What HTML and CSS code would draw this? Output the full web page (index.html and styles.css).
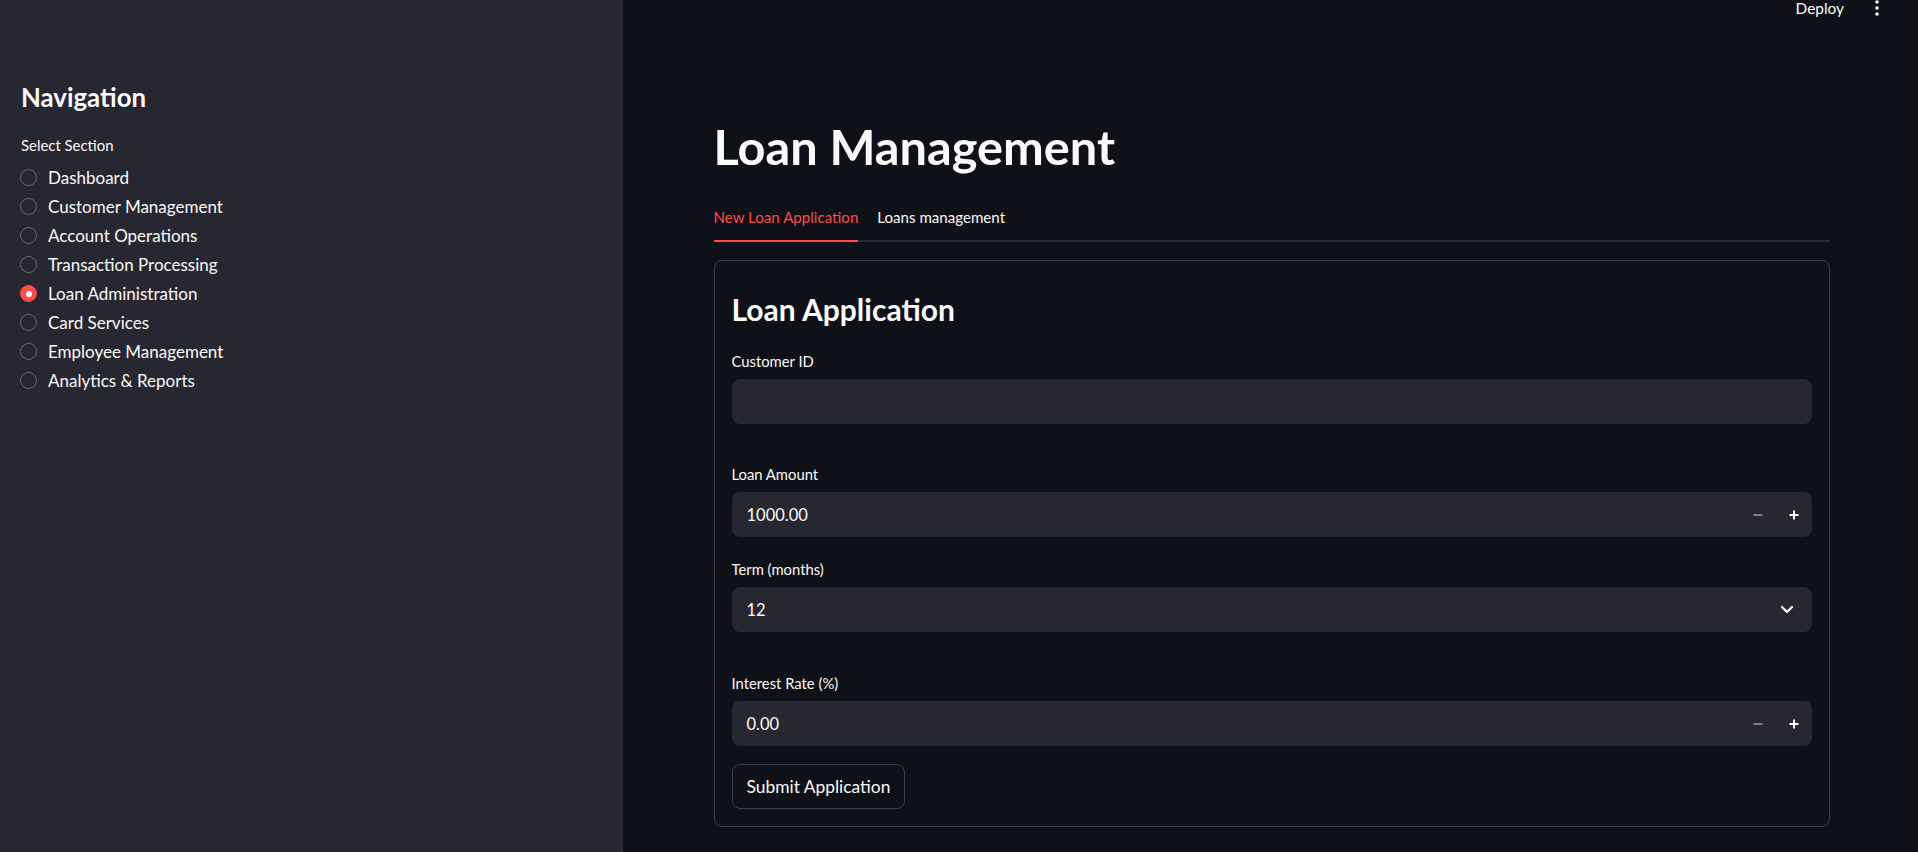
FILE: index.html
```html
<!DOCTYPE html>
<html lang="en">
<head>
<meta charset="utf-8">
<title>Loan Management</title>
<link rel="stylesheet" href="styles.css">
</head>
<body>
<div class="app">
  <aside class="sidebar">
    <h2 class="side-title">Navigation</h2>
    <div class="radio-caption">Select Section</div>
    <div class="radio-group">
      <div class="radio"><span class="circle"></span><span>Dashboard</span></div>
      <div class="radio"><span class="circle"></span><span>Customer Management</span></div>
      <div class="radio"><span class="circle"></span><span>Account Operations</span></div>
      <div class="radio"><span class="circle"></span><span>Transaction Processing</span></div>
      <div class="radio checked"><span class="circle"></span><span>Loan Administration</span></div>
      <div class="radio"><span class="circle"></span><span>Card Services</span></div>
      <div class="radio"><span class="circle"></span><span>Employee Management</span></div>
      <div class="radio"><span class="circle"></span><span>Analytics &amp; Reports</span></div>
    </div>
  </aside>
  <main class="main">
    <header class="topbar">
      <span class="deploy">Deploy</span>
      <span class="menu">
        <svg width="4" height="16" viewBox="0 0 4 16"><circle cx="2" cy="2" r="1.8" fill="#fafafa"/><circle cx="2" cy="8" r="1.8" fill="#fafafa"/><circle cx="2" cy="14" r="1.8" fill="#fafafa"/></svg>
      </span>
    </header>
    <div class="content">
      <h1 class="page-title">Loan Management</h1>
      <div class="tabs">
        <div class="tab active">New Loan Application</div>
        <div class="tab">Loans management</div>
      </div>
      <section class="card">
        <h2 class="card-title">Loan Application</h2>
        <div class="field f1">
          <div class="label">Customer ID</div>
          <div class="input"></div>
        </div>
        <div class="field f2">
          <div class="label">Loan Amount</div>
          <div class="input number">
            <span class="value">1000.00</span>
            <span class="steppers">
              <span class="step"><svg width="10" height="10" viewBox="0 0 10 10"><rect x="0.5" y="4" width="9" height="2" fill="#7d7f87"/></svg></span>
              <span class="step"><svg width="10" height="10" viewBox="0 0 10 10"><rect x="0.5" y="4" width="9" height="2" fill="#fafafa"/><rect x="4" y="0.5" width="2" height="9" fill="#fafafa"/></svg></span>
            </span>
          </div>
        </div>
        <div class="field f3">
          <div class="label">Term (months)</div>
          <div class="input select">
            <span class="value">12</span>
            <svg class="chev" width="14" height="9" viewBox="0 0 14 9"><path d="M2 2l5 5 5-5" fill="none" stroke="#fafafa" stroke-width="2.4" stroke-linecap="round" stroke-linejoin="round"/></svg>
          </div>
        </div>
        <div class="field f4">
          <div class="label">Interest Rate (%)</div>
          <div class="input number">
            <span class="value">0.00</span>
            <span class="steppers">
              <span class="step"><svg width="10" height="10" viewBox="0 0 10 10"><rect x="0.5" y="4" width="9" height="2" fill="#7d7f87"/></svg></span>
              <span class="step"><svg width="10" height="10" viewBox="0 0 10 10"><rect x="0.5" y="4" width="9" height="2" fill="#fafafa"/><rect x="4" y="0.5" width="2" height="9" fill="#fafafa"/></svg></span>
            </span>
          </div>
        </div>
        <button class="submit">Submit Application</button>
      </section>
    </div>
  </main>
</div>
</body>
</html>
```

FILE: styles.css
```css
* { box-sizing: border-box; }
html, body { margin: 0; padding: 0; }
body {
  width: 1918px;
  height: 852px;
  overflow: hidden;
  background: #0e1117;
  color: #fafafa;
  font-family: Lato, "Noto Sans", sans-serif;
}
.app { display: flex; height: 852px; }
.sidebar {
  width: 623px;
  flex: none;
  background: #262730;
  padding: 82px 20px 0 20px;
}
.side-title {
  margin: 0;
  font-size: 25.8px;
  line-height: 31px;
  font-weight: 700;
  padding-left: 1px;
}
.radio-caption {
  margin-top: 20px;
  font-size: 14.9px;
  line-height: 24px;
  padding-left: 1px;
}
.radio-group { margin-top: 6px; }
.radio {
  display: flex;
  align-items: center;
  height: 29px;
  font-size: 17px;
  gap: 11px;
}
.circle {
  width: 17px;
  height: 17px;
  border-radius: 50%;
  border: 1.5px solid #6a6c74;
  flex: none;
  position: relative;
}
.radio.checked .circle {
  background: #ff4b4b;
  border-color: #ff4b4b;
}
.radio.checked .circle::after {
  content: "";
  position: absolute;
  left: 50%;
  top: 50%;
  width: 6px;
  height: 6px;
  margin: -3px 0 0 -3px;
  border-radius: 50%;
  background: #fff;
}
.main { flex: 1; display: flex; flex-direction: column; }
.topbar {
  height: 16px;
  display: flex;
  justify-content: flex-end;
  align-items: center;
  padding-right: 29px;
}
.deploy { font-size: 15.4px; line-height: 16px; margin-right: 21px; }
.menu { width: 24px; display: flex; justify-content: center; }
.content {
  width: 1116px;
  margin: 0 auto;
  padding-top: 101px;
  transform: translateX(1px);
}
.page-title {
  margin: 0;
  font-size: 48.7px;
  line-height: 58px;
  font-weight: 700;
}
.tabs {
  margin-top: 22px;
  display: flex;
  gap: 19px;
  border-bottom: 2px solid #2b2c35;
}
.tab {
  font-size: 15.1px;
  line-height: 20px;
  padding: 10px 0 13px;
  margin-bottom: -2px;
  border-bottom: 2px solid transparent;
}
.tab.active { color: #ff4b4b; border-bottom-color: #ff4b4b; }
.card {
  margin-top: 18px;
  border: 1px solid #3d4045;
  border-radius: 8px;
  padding: 28px 17px 17px;
}
.card-title {
  margin: 0 0 20px;
  font-size: 30px;
  line-height: 41px;
  font-weight: 700;
}
.label { font-size: 14.8px; line-height: 22px; margin-bottom: 7px; }
.f2 { margin-top: 39px; }
.f3 { margin-top: 21px; }
.f4 { margin-top: 40px; }
.input {
  height: 45px;
  background: #262730;
  border-radius: 8px;
  display: flex;
  align-items: center;
  padding-left: 15px;
  font-size: 16.5px;
}
.input .value { flex: 1; }
.steppers { display: flex; height: 100%; }
.step { width: 36px; display: flex; align-items: center; justify-content: center; }
.select .chev { margin-right: 18px; }
.submit {
  margin-top: 18px;
  height: 45px;
  padding: 0 14px;
  background: #0e1117;
  color: #fafafa;
  border: 1px solid #3d4045;
  border-radius: 8px;
  font-family: inherit;
  font-size: 17.4px;
}
```
